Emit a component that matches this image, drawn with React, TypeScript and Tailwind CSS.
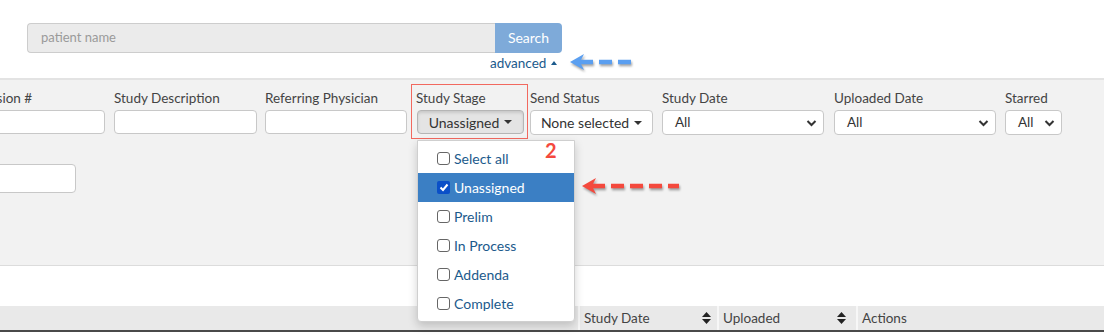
import React from "react";

const font = { fontFamily: "Lato, 'Noto Sans', sans-serif" };

const SortIcon = () => (
  <svg width="9" height="12" viewBox="0 0 9 12" className="fill-[#222]">
    <path d="M4.5 0 L9 5 H0 Z" />
    <path d="M0 7 H9 L4.5 12 Z" />
  </svg>
);

const Caret = () => (
  <span className="inline-block ml-[5px] align-middle border-l-[4px] border-r-[4px] border-t-[4px] border-l-transparent border-r-transparent border-t-[#333]" />
);

const Chevron = () => (
  <svg width="11" height="8" viewBox="0 0 11 8" className="stroke-[#333]" fill="none">
    <path d="M1.5 2 L5.5 6 L9.5 2" strokeWidth="2" />
  </svg>
);

const DashedArrow = ({ color, width }: { color: string; width: number }) => (
  <svg width={width} height="22" viewBox={`0 0 ${width} 22`} className="drop-shadow-[1px_2px_1px_rgba(0,0,0,0.35)]">
    <path d="M2 11 L16 3 L12 11 L16 19 Z" fill={color} />
    <line x1="12" y1="11" x2={width - 3} y2="11" stroke={color} strokeWidth="4.5" strokeDasharray="13 6" />
  </svg>
);

const stages = ["Select all", "Unassigned", "Prelim", "In Process", "Addenda", "Complete"];

const Check = ({ on }: { on: boolean }) =>
  on ? (
    <span className="w-[13px] h-[13px] rounded-[2px] bg-[#0a4fc8] flex items-center justify-center">
      <svg width="10" height="9" viewBox="0 0 10 9">
        <path d="M1.5 4.5 L4 7 L8.5 1.5" stroke="white" strokeWidth="2" fill="none" />
      </svg>
    </span>
  ) : (
    <span className="w-[13px] h-[13px] rounded-[3px] border border-[#666] bg-white" />
  );

const labelCls = "text-[13.5px] text-[#444] h-[18px] leading-[18px] mb-[3px] whitespace-nowrap";

const Field = ({ label, w, colW }: { label: string; w: number; colW: number }) => (
  <div className="flex flex-col shrink-0" style={{ width: colW }}>
    <label className={labelCls}>{label}</label>
    <input className="h-[24px] bg-white border border-[#c8c8c8] rounded-[4px]" style={{ width: w }} />
  </div>
);

const SelectField = ({ label, w, colW }: { label: string; w: number; colW: number }) => (
  <div className="flex flex-col shrink-0" style={{ width: colW }}>
    <label className={labelCls}>{label}</label>
    <div className="h-[25px] bg-white border border-[#c8c8c8] rounded-[4px] flex items-center justify-between pl-[12px] pr-[6px] text-[13.5px] text-[#333]" style={{ width: w }}>
      <span>All</span>
      <Chevron />
    </div>
  </div>
);

const App = () => {
  return (
    <div className="w-[1104px] h-[335px] overflow-hidden bg-white relative" style={font}>
      {/* search bar */}
      <div className="h-[78px] pl-[27px] pt-[23px] relative">
        <div className="flex">
          <div className="w-[468px] h-[30px] bg-[#ebebeb] border border-[#cdcdcd] border-r-0 rounded-l-[4px] flex items-center pl-[13px] text-[13px] text-[#9a9a9a]">
            patient name
          </div>
          <div className="w-[67px] h-[30px] bg-[#7eaad9] rounded-r-[4px] flex items-center justify-center text-white text-[14px] pb-[2px]">
            Search
          </div>
        </div>
        <div className="absolute left-[490px] top-[53px] flex items-center text-[13.5px] text-[#1b5a8c]">
          advanced
          <span className="ml-[5px] border-l-[3px] border-r-[3px] border-b-[4px] border-l-transparent border-r-transparent border-b-[#1b5a8c]" />
        </div>
        <div className="absolute left-[568px] top-[51px]">
          <DashedArrow color="#5b9ff0" width={72} />
        </div>
      </div>

      {/* filter panel */}
      <div className="h-[188px] bg-[#f2f2f2] border-t-2 border-[#e3e3e3] border-b border-b-[#dcdcdc] pt-[9px]">
        <div className="flex ml-[-38px]">
          <Field label="Accession #" w={143} colW={152} />
          <Field label="Study Description" w={143} colW={151} />
          <Field label="Referring Physician" w={142} colW={151} />
          <div className="flex flex-col shrink-0 w-[114px] relative">
            <label className={labelCls}>Study Stage</label>
            <div className="w-[107px] h-[24px] ml-[1px] bg-[#e4e4e4] border border-[#b5b5b5] rounded-[4px] flex items-center justify-center text-[14px] text-[#333] shadow-[inset_0_2px_3px_rgba(0,0,0,0.12)]">
              Unassigned
              <Caret />
            </div>
            <div className="absolute left-[-5px] top-[-5px] w-[117px] h-[55px] border border-[#f2695f]" />
          </div>
          <div className="flex flex-col shrink-0 w-[132px]">
            <label className={labelCls}>Send Status</label>
            <div className="w-[123px] h-[25px] bg-white border border-[#c8c8c8] rounded-[4px] flex items-center justify-center text-[14px] text-[#333]">
              None selected
              <Caret />
            </div>
          </div>
          <SelectField label="Study Date" w={162} colW={172} />
          <SelectField label="Uploaded Date" w={162} colW={171} />
          <SelectField label="Starred" w={57} colW={80} />
        </div>
        <div className="mt-[29px] ml-[-80px]">
          <input className="w-[156px] h-[29px] bg-white border border-[#c8c8c8] rounded-[4px]" />
        </div>
      </div>

      {/* table */}
      <div className="h-[40px] bg-white" />
      <div className="h-[26px] bg-[#e9e9e9] border-b-2 border-[#4a4a4a] flex text-[13.5px] text-[#444]">
        <div className="w-[578px] shrink-0" />
        <div className="w-[139px] shrink-0 border-l-2 border-[#f7f7f7] flex items-center justify-between pl-[4px] pr-[6px]">
          Study Date
          <SortIcon />
        </div>
        <div className="w-[139px] shrink-0 border-l-2 border-[#f7f7f7] flex items-center justify-between pl-[4px] pr-[10px]">
          Uploaded
          <SortIcon />
        </div>
        <div className="flex-1 border-l-2 border-[#f7f7f7] flex items-center pl-[4px]">Actions</div>
      </div>

      {/* dropdown menu */}
      <div className="absolute left-[417px] top-[140px] w-[158px] h-[182px] bg-white border border-[#cfcfcf] rounded-b-[4px] shadow-[0_4px_10px_rgba(0,0,0,0.18)] pt-[3px]">
        {stages.map((s) => {
          const on = s === "Unassigned";
          return (
            <div
              key={s}
              className={`h-[29px] flex items-center gap-[4px] pl-[19px] text-[14px] ${on ? "bg-[#3b7fc4] text-white" : "text-[#1b5a8c]"}`}
            >
              <Check on={on} />
              {s}
            </div>
          );
        })}
      </div>

      {/* annotations */}
      <div
        className="absolute left-[545px] top-[140px] text-[20px] font-bold text-[#f4493d] leading-none"
        style={{ textShadow: "0 0 2px #fff, 0 0 2px #fff" }}
      >
        2
      </div>
      <div className="absolute left-[580px] top-[175px]">
        <DashedArrow color="#f4493d" width={102} />
      </div>
    </div>
  );
};

export default App;
